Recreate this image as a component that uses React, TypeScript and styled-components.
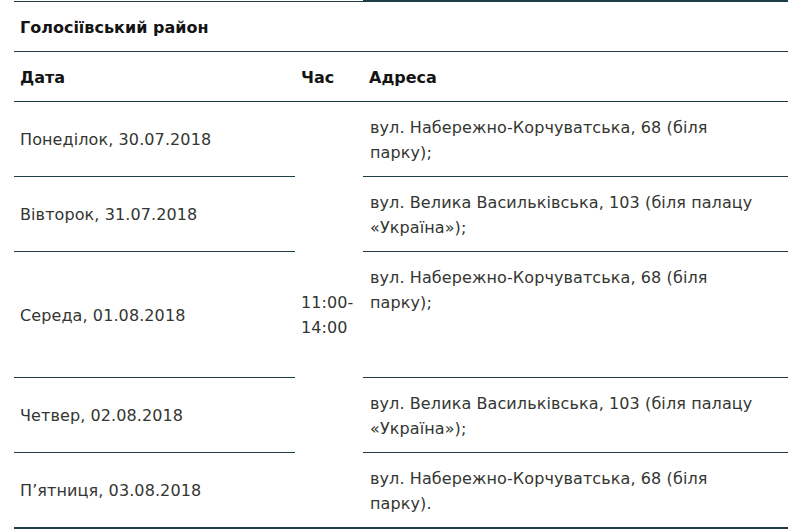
import React from "react";
import styled, { createGlobalStyle } from "styled-components";

const line = "#1e3c4a";

const GlobalStyle = createGlobalStyle`
  html, body {
    margin: 0;
    padding: 0;
    background: #fff;
  }
  body {
    font-family: "DejaVu Sans", "Liberation Sans", sans-serif;
  }
`;

const Table = styled.table`
  margin-left: 14px;
  width: 774px;
  border-collapse: collapse;
  font-size: 16px;
  letter-spacing: 0.1px;
  line-height: 25px;
  color: #333631;
`;

const Row = styled.tr<{ $height?: number }>`
  ${(p) => (p.$height ? `height: ${p.$height}px;` : "")}
`;

const Cell = styled.td<{ $top?: number; $bottom?: number; $width?: number }>`
  padding: 13px 7px 11px 6px;
  vertical-align: middle;
  text-align: left;
  border-top: ${(p) => (p.$top ? `${p.$top}px solid ${line}` : "none")};
  border-bottom: ${(p) => (p.$bottom ? `${p.$bottom}px solid ${line}` : "none")};
  ${(p) => (p.$width ? `width: ${p.$width}px;` : "")}
`;

const HeadCell = styled(Cell)`
  font-weight: 700;
  letter-spacing: 0;
  color: #141414;
`;

const AddressCell = styled(Cell)`
  vertical-align: top;
  padding-left: 7px;
  padding-right: 25px;
`;

interface Day {
  date: string;
  address: string;
  height: number;
}

const days: Day[] = [
  { date: "Понеділок, 30.07.2018", address: "вул. Набережно-Корчуватська, 68 (біля парку);", height: 75 },
  { date: "Вівторок, 31.07.2018", address: "вул. Велика Васильківська, 103 (біля палацу «Україна»);", height: 75 },
  { date: "Середа, 01.08.2018", address: "вул. Набережно-Корчуватська, 68 (біля парку);", height: 126 },
  { date: "Четвер, 02.08.2018", address: "вул. Велика Васильківська, 103 (біля палацу «Україна»);", height: 75 },
  { date: "П’ятниця, 03.08.2018", address: "вул. Набережно-Корчуватська, 68 (біля парку).", height: 75 },
];

export default function App() {
  const last = days.length - 1;
  return (
    <>
      <GlobalStyle />
      <Table>
        <tbody>
          <Row $height={50}>
            <HeadCell colSpan={2} $top={1} $bottom={1}>
              Голосіївський район
            </HeadCell>
            <HeadCell $top={2} $bottom={1} />
          </Row>
          <Row $height={50}>
            <HeadCell $bottom={1} $width={268}>Дата</HeadCell>
            <HeadCell $bottom={1} $width={55}>Час</HeadCell>
            <HeadCell $bottom={1}>Адреса</HeadCell>
          </Row>
          {days.map((d, i) => (
            <Row key={d.date} $height={d.height}>
              <Cell $bottom={i === last ? 2 : 1}>{d.date}</Cell>
              {i === 0 && (
                <Cell rowSpan={days.length} $bottom={2}>
                  11:00-
                  <br />
                  14:00
                </Cell>
              )}
              <AddressCell $bottom={i === last ? 2 : 1}>{d.address}</AddressCell>
            </Row>
          ))}
        </tbody>
      </Table>
    </>
  );
}
